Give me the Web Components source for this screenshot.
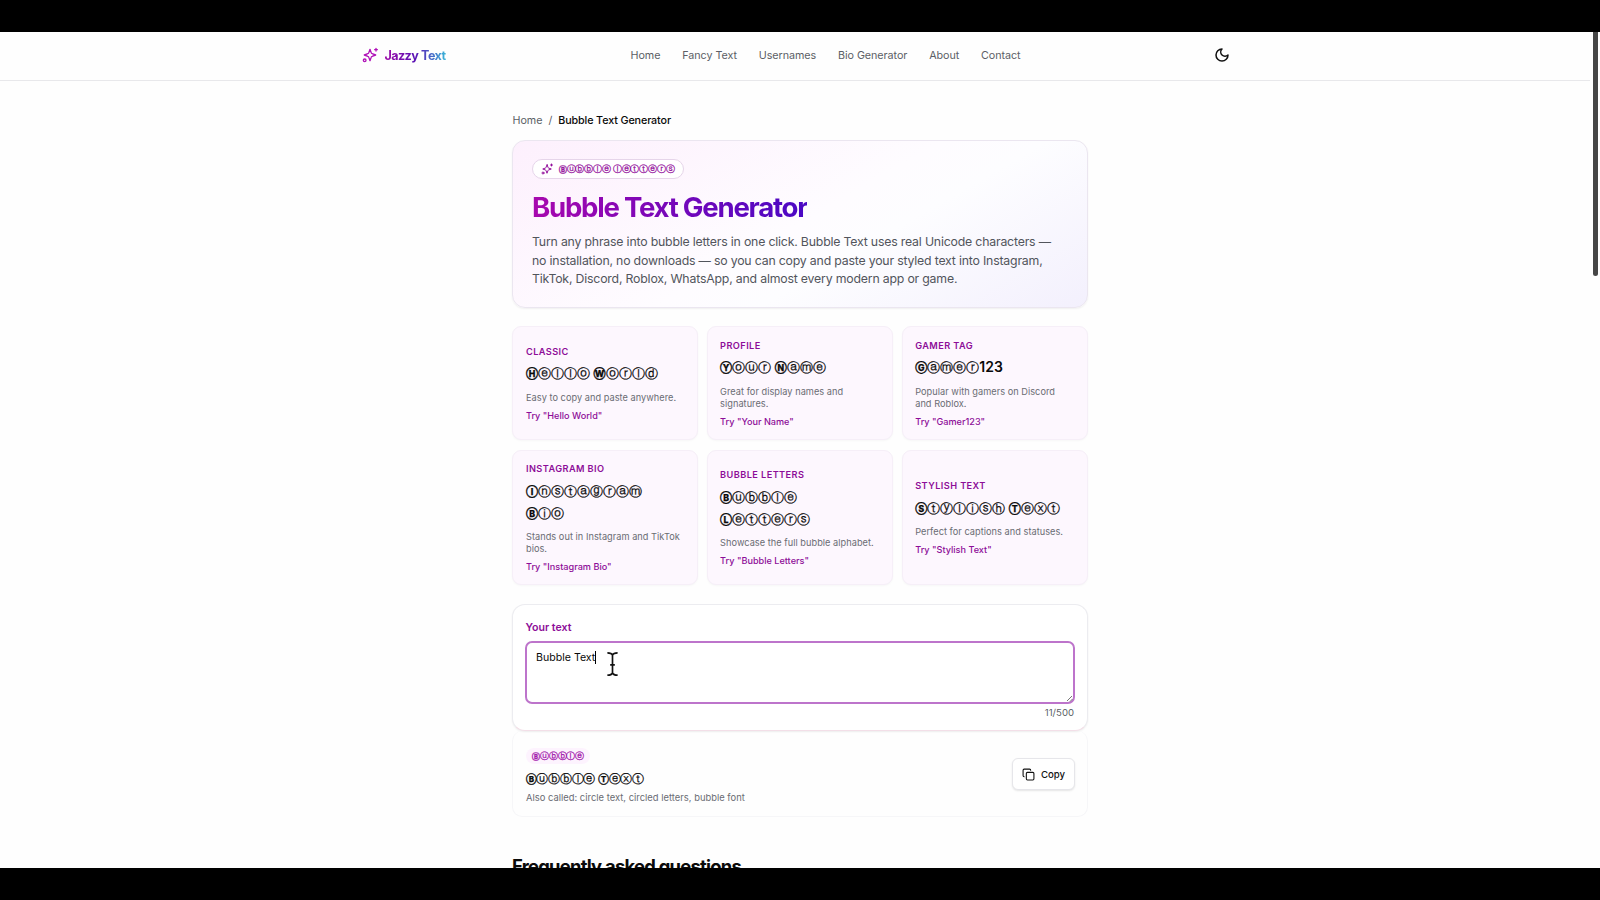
<!DOCTYPE html>
<html lang="en">
<head>
<meta charset="utf-8">
<title>Bubble Text Generator</title>
<style>
  body {
    margin: 0;
    background: #000;
    font-family: Inter, "Noto Sans CJK JP", sans-serif;
    color: #0a0a0a;
    overflow: hidden;
  }
</style>
</head>
<body>
<app-window>
  <site-header></site-header>
  <page-content></page-content>
</app-window>

<script>
const SPARKLES = `
  <svg viewBox="0 0 24 24" fill="none" stroke="currentColor" stroke-width="2" stroke-linecap="round" stroke-linejoin="round">
    <path d="M12 3.500l-1.900 5.300a2 2 0 0 1-1.300 1.300L3.500 12l5.300 1.900a2 2 0 0 1 1.300 1.300L12 20.500l1.900-5.300a2 2 0 0 1 1.300-1.300l5.300-1.900-5.300-1.900a2 2 0 0 1-1.300-1.300Z"/>
    <path d="M21 2v4M19 4h4"/>
    <circle cx="4" cy="20" r="2"/>
  </svg>`;

class AppWindow extends HTMLElement {
  constructor() {
    super();
    this.attachShadow({mode: 'open'}).innerHTML = `
    <style>
      :host {
        display: block;
        position: relative;
        width: 1600px;
        height: 836px;
        margin: 32px 0;
        background: #fefefe;
        overflow: hidden;
      }
      .thumb {
        position: absolute;
        right: 2px;
        top: 0;
        width: 5px;
        height: 244px;
        background: #464646;
        border-radius: 0 0 3px 3px;
      }
    </style>
    <slot></slot>
    <div class="thumb"></div>`;
  }
}

class SiteHeader extends HTMLElement {
  constructor() {
    super();
    const links = ['Home', 'Fancy Text', 'Usernames', 'Bio Generator', 'About', 'Contact'];
    this.attachShadow({mode: 'open'}).innerHTML = `
    <style>
      :host {
        display: flex;
        align-items: center;
        box-sizing: border-box;
        height: 49px;
        padding: 0 360px 2px 362px;
        margin-right: 10px;
        border-bottom: 1px solid #e8e8eb;
      }
      .logo {
        display: flex;
        align-items: center;
        gap: 6.500px;
        width: 268.500px;
        color: #b012b8;
      }
      .logo svg {
        width: 16px;
        height: 16px;
      }
      .logo b {
        padding-right: 1px;
        font-size: 12.600px;
        font-weight: 700;
        letter-spacing: -0.600px;
        word-spacing: 0.500px;
        background: linear-gradient(90deg, #9c0aa8, #5a13b5 50%, #38b6d8);
        -webkit-background-clip: text;
        color: transparent;
      }
      nav {
        display: flex;
        gap: 21.800px;
        flex: 1;
      }
      nav a {
        font-size: 10.750px;
        letter-spacing: -0.050px;
        color: #5c5f66;
        white-space: nowrap;
      }
      .moon {
        width: 16px;
        height: 16px;
      }
    </style>
    <div class="logo">${SPARKLES}<b>Jazzy Text</b></div>
    <nav>${links.map(l => `<a>${l}</a>`).join('')}</nav>
    <svg class="moon" viewBox="0 0 24 24" fill="none" stroke="#111" stroke-width="2.300" stroke-linecap="round" stroke-linejoin="round">
      <path d="M12 3a6 6 0 0 0 9 9 9 9 0 1 1-9-9Z"/>
    </svg>`;
  }
}

// writes its text attribute in circled letters, capitals a little heavier
class BubbleText extends HTMLElement {
  constructor() {
    super();
    this.attachShadow({mode: 'open'});
  }

  connectedCallback() {
    const circled = [...this.getAttribute('text')].map(c => {
      if (/[A-Z]/.test(c)) return `<b>${String.fromCodePoint(0x24B6 + c.charCodeAt(0) - 65)}</b>`;
      if (/[a-z]/.test(c)) return `<i>${String.fromCodePoint(0x24D0 + c.charCodeAt(0) - 97)}</i>`;
      return c;
    }).join('');
    this.shadowRoot.innerHTML = `
    <style>
      :host {
        display: block;
      }
      b, i {
        font-style: normal;
        line-height: 1;
      }
      b {
        font-size: 0.620em;
        font-weight: 800;
        vertical-align: 0.080em;
        -webkit-text-stroke: 0.250px currentColor;
      }
      i {
        font-family: "DejaVu Sans", sans-serif;
        font-size: 0.945em;
        font-weight: 400;
        -webkit-text-stroke: 0.250px currentColor;
      }
    </style>${circled}`;
  }
}

class HeroCard extends HTMLElement {
  constructor() {
    super();
    this.attachShadow({mode: 'open'}).innerHTML = `
    <style>
      :host {
        display: block;
        box-sizing: border-box;
        height: 168px;
        padding: 18px 19px 0;
        border: 1px solid #ebe6f0;
        border-radius: 13px;
        background: linear-gradient(150deg, #fdf0fd 0%, #fefcff 50%, #fdfdff 62%, #f3f0fd 100%);
        box-shadow: 0 1px 2px rgba(0, 0, 0, 0.06);
      }
      .badge {
        display: flex;
        align-items: center;
        gap: 6px;
        box-sizing: border-box;
        height: 20px;
        width: 152px;
        padding: 0 8px;
        border: 1px solid #e6d5ea;
        border-radius: 10px;
        background: #fff;
        color: #930f9c;
      }
      .badge svg {
        flex-shrink: 0;
        width: 12px;
        height: 12px;
      }
      bubble-text {
        font-size: 9.100px;
        line-height: 18px;
        letter-spacing: -0.220px;
        white-space: nowrap;
      }
      h1 {
        width: max-content;
        margin: 11px 0 9px;
        font-size: 27.600px;
        line-height: 34px;
        font-weight: 700;
        letter-spacing: -1.250px;
        background: linear-gradient(90deg, #a808ae, #7b07b8 45%, #4a08c4);
        -webkit-background-clip: text;
        color: transparent;
      }
      p {
        margin: 0;
        font-size: 12.300px;
        line-height: 18.700px;
        letter-spacing: -0.190px;
        color: #52555c;
        white-space: nowrap;
      }
    </style>
    <div class="badge">${SPARKLES}<bubble-text text="Bubble letters"></bubble-text></div>
    <h1>Bubble Text Generator</h1>
    <p>Turn any phrase into bubble letters in one click. Bubble Text uses real Unicode characters —<br>
    no installation, no downloads — so you can copy and paste your styled text into Instagram,<br>
    TikTok, Discord, Roblox, WhatsApp, and almost every modern app or game.</p>`;
  }
}

class ExampleCard extends HTMLElement {
  constructor() {
    super();
    this.attachShadow({mode: 'open'});
  }

  connectedCallback() {
    const text = this.getAttribute('text');
    this.shadowRoot.innerHTML = `
    <style>
      :host {
        display: flex;
        flex-direction: column;
        justify-content: center;
        box-sizing: border-box;
        padding: 1.500px 12px 0;
        border: 1px solid #f6eff8;
        border-radius: 9px;
        background: #fdf7fe;
        box-shadow: 0 1px 2px rgba(0, 0, 0, 0.03);
      }
      .label {
        font-size: 9.200px;
        line-height: 12px;
        font-weight: 600;
        letter-spacing: 0.420px;
        text-transform: uppercase;
        color: #8d0d98;
      }
      bubble-text {
        margin: 4.500px 8px 7.200px 0;
        font-size: 14px;
        line-height: 22px;
        font-weight: 600;
      }
      .about {
        font-size: 9.200px;
        line-height: 12px;
        letter-spacing: 0.040px;
        color: #6a6c73;
      }
      .try {
        margin-top: 6px;
        font-size: 9.150px;
        line-height: 12px;
        font-weight: 500;
        color: #8d0d98;
      }
    </style>
    <div class="label">${this.getAttribute('label')}</div>
    <bubble-text text="${text}"></bubble-text>
    <div class="about"><slot></slot></div>
    <div class="try">Try "${text}"</div>`;
  }
}

class TextInput extends HTMLElement {
  constructor() {
    super();
    this.attachShadow({mode: 'open'}).innerHTML = `
    <style>
      :host {
        display: block;
        box-sizing: border-box;
        height: 127px;
        padding: 16px 12px 0;
        border: 1px solid #ececf0;
        border-bottom-color: #f3dfe8;
        border-radius: 13px;
        background: #fff;
        box-shadow: 0 1px 2px rgba(0, 0, 0, 0.07);
      }
      label {
        display: block;
        padding-left: 0.500px;
        font-size: 10.600px;
        line-height: 14px;
        font-weight: 600;
        color: #8d0d98;
      }
      .area {
        position: relative;
        display: flex;
        box-sizing: border-box;
        height: 63px;
        margin-top: 6px;
        padding: 7px 9px;
        border: 2px solid #bd74cb;
        border-radius: 7px;
        font-size: 10.600px;
        line-height: 15px;
      }
      .caret {
        width: 1px;
        height: 13px;
        margin-top: 1px;
        background: #000;
      }
      .grip {
        position: absolute;
        right: 0;
        bottom: 0;
        width: 7px;
        height: 7px;
      }
      .beam {
        position: absolute;
        left: 79px;
        top: 8px;
        width: 13px;
        height: 26px;
      }
      .count {
        margin-top: 2px;
        padding-right: 1px;
        font-size: 9.600px;
        line-height: 13px;
        text-align: right;
        color: #5c5f66;
      }
    </style>
    <label>Your text</label>
    <div class="area">
      <span>Bubble Text</span><span class="caret"></span>
      <svg class="beam" viewBox="0 0 14 27" fill="none" stroke="#111" stroke-width="1.800">
        <path d="M1.500 1.500q4.500 0 5.500 2.500q1-2.500 5.500-2.500M7 4v19M1.500 25.500q4.500 0 5.500-2.500q1 2.500 5.500 2.500M4.500 14.500h5"/>
      </svg>
      <svg class="grip" viewBox="0 0 7 7" stroke="#777" stroke-width="1"><path d="M1 6L6 1M4 6.500L6.500 4"/></svg>
    </div>
    <div class="count">11/500</div>`;
  }
}

class ResultCard extends HTMLElement {
  constructor() {
    super();
    this.attachShadow({mode: 'open'}).innerHTML = `
    <style>
      :host {
        display: flex;
        align-items: center;
        justify-content: space-between;
        box-sizing: border-box;
        height: 86px;
        padding: 0 12px 0 13px;
        border: 1px solid #f6f6f8;
        border-top: 0;
        border-radius: 10px;
      }
      .texts {
        margin-top: 4px;
      }
      .tag {
        width: max-content;
        padding: 0 6px;
        border-radius: 8px;
        background: #fdf3fe;
        font-size: 9.100px;
        line-height: 16px;
        letter-spacing: -0.100px;
        color: #a012aa;
      }
      .main {
        margin-top: 5px;
        font-size: 12.400px;
        line-height: 20px;
        letter-spacing: -0.250px;
        font-weight: 500;
      }
      .aka {
        margin-top: 2px;
        font-size: 9.400px;
        line-height: 13px;
        letter-spacing: 0.010px;
        color: #6a6c73;
      }
      button {
        display: flex;
        align-items: center;
        justify-content: center;
        gap: 6px;
        width: 63px;
        height: 32px;
        padding: 1px 0 0;
        border: 1px solid #e6e6ea;
        border-radius: 6px;
        background: #fff;
        box-shadow: 0 1px 2px rgba(0, 0, 0, 0.1);
        font: 500 9.600px Inter, sans-serif;
        color: #111;
      }
      button svg {
        width: 13px;
        height: 13px;
      }
    </style>
    <div class="texts">
      <bubble-text class="tag" text="Bubble"></bubble-text>
      <bubble-text class="main" text="Bubble Text"></bubble-text>
      <div class="aka">Also called: circle text, circled letters, bubble font</div>
    </div>
    <button>
      <svg viewBox="0 0 24 24" fill="none" stroke="currentColor" stroke-width="2" stroke-linecap="round" stroke-linejoin="round">
        <rect width="14" height="14" x="8" y="8" rx="2"/>
        <path d="M4 16c-1.100 0-2-.9-2-2V4c0-1.100.9-2 2-2h10c1.100 0 2 .9 2 2"/>
      </svg>Copy
    </button>`;
  }
}

class PageContent extends HTMLElement {
  constructor() {
    super();
    this.attachShadow({mode: 'open'}).innerHTML = `
    <style>
      :host {
        display: block;
        width: 576px;
        margin: 32px 0 0 512px;
      }
      .crumbs {
        display: flex;
        gap: 6px;
        height: 14px;
        margin-bottom: 13px;
        padding-left: 0.500px;
        font-size: 10.750px;
        line-height: 15px;
        letter-spacing: -0.050px;
        color: #5c5f66;
      }
      .crumbs b {
        font-weight: 500;
        letter-spacing: -0.120px;
        color: #0a0a0a;
      }
      .grid {
        display: grid;
        grid-template-columns: repeat(3, 1fr);
        grid-template-rows: 114px 135px;
        gap: 10px 9.300px;
        margin: 18px 0 19px;
      }
      example-card:nth-child(3n + 1) {
        padding-left: 13px;
      }
      h2 {
        margin: 38px 0 0;
        font-size: 18.400px;
        line-height: 22px;
        font-weight: 700;
        letter-spacing: -0.750px;
        white-space: nowrap;
      }
    </style>
    <div class="crumbs"><span>Home</span><span>/</span><b>Bubble Text Generator</b></div>
    <hero-card></hero-card>
    <div class="grid">
      <example-card label="Classic" text="Hello World">Easy to copy and paste anywhere.</example-card>
      <example-card label="Profile" text="Your Name">Great for display names and<br>signatures.</example-card>
      <example-card label="Gamer tag" text="Gamer123">Popular with gamers on Discord<br>and Roblox.</example-card>
      <example-card label="Instagram bio" text="Instagram Bio">Stands out in Instagram and TikTok<br>bios.</example-card>
      <example-card label="Bubble letters" text="Bubble Letters">Showcase the full bubble alphabet.</example-card>
      <example-card label="Stylish text" text="Stylish Text">Perfect for captions and statuses.</example-card>
    </div>
    <text-input></text-input>
    <result-card></result-card>
    <h2>Frequently asked questions</h2>`;
  }
}

customElements.define('app-window', AppWindow);
customElements.define('site-header', SiteHeader);
customElements.define('bubble-text', BubbleText);
customElements.define('hero-card', HeroCard);
customElements.define('example-card', ExampleCard);
customElements.define('text-input', TextInput);
customElements.define('result-card', ResultCard);
customElements.define('page-content', PageContent);
</script>
</body>
</html>
